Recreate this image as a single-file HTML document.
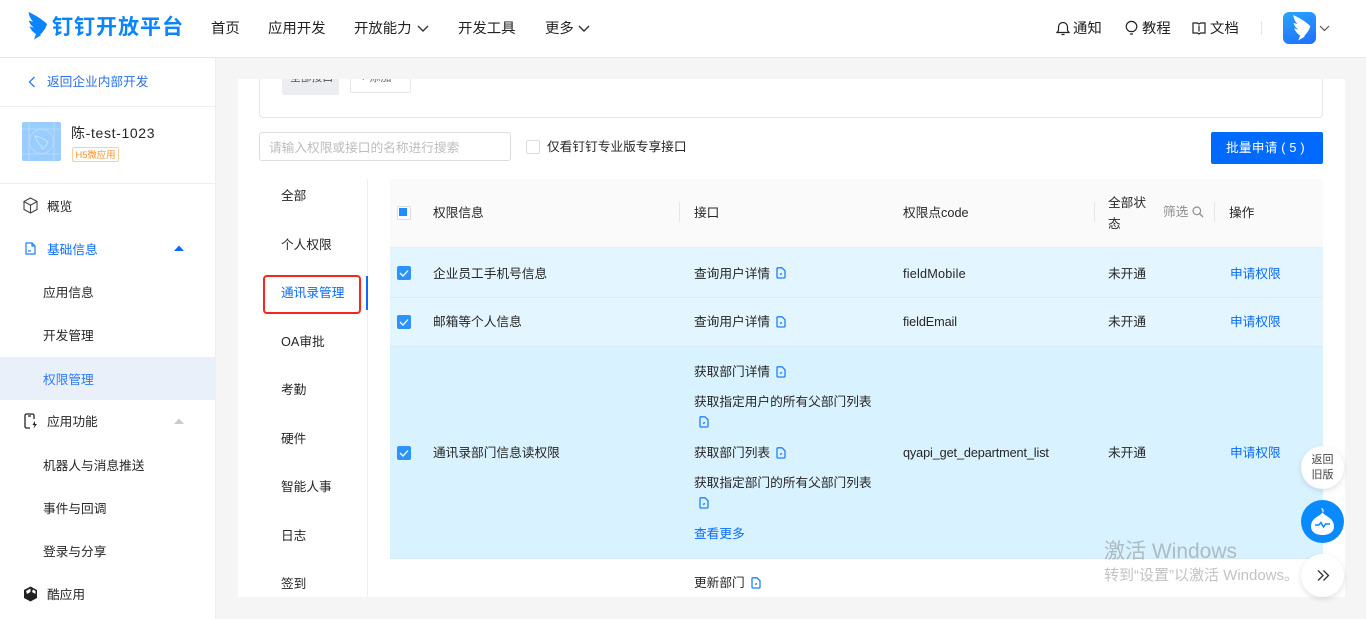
<!DOCTYPE html>
<html lang="zh">
<head>
<meta charset="utf-8">
<title>钉钉开放平台</title>
<style>
html,body{margin:0;padding:0;width:1366px;height:619px;overflow:hidden;background:#f5f5f5}
body{position:relative;font-family:"Liberation Sans","Noto Sans CJK SC",sans-serif;font-size:12.7px;color:#262626}
.a{position:absolute;white-space:nowrap;line-height:20px}
.b{position:absolute}
.blue{color:#0a6cff}
.nav{font-size:14.4px;line-height:20px;top:19px;color:#222}
.m .a,.s{margin-top:1px}
svg{overflow:visible}
.d path{fill:none;stroke:#1e7fff;stroke-width:1.300}
</style>
</head>
<body>
<!-- header -->
<div class="b" style="left:0;top:0;width:1366px;height:57px;background:#fff;border-bottom:1px solid #e8e8e8"></div>
<svg class="b" style="left:28px;top:12px" width="20" height="28" viewBox="0 0 20 28"><path fill="#0a84ff" d="M.5 0C7 3 14 7 19 12C18 16 15 20 12 23L13.500 23L6 27.500L8 22C4.500 20 2.500 17 1.500 14C3 15 4.500 15.500 6 15.500C3.500 14 1.500 11.500 .8 8.500C2 9 3.500 9.500 5 9.500C2.500 7 1 3.500 .5 0Z"/></svg>
<div class="a" style="left:52px;top:14px;font-size:21px;line-height:28px;letter-spacing:1px;font-weight:700;color:#0a84ff">钉钉开放平台</div>
<div class="a nav" style="left:211px">首页</div>
<div class="a nav blue" style="left:268px">应用开发</div>
<div class="a nav" style="left:354px">开放能力</div>
<svg class="b" style="left:417px;top:25px" width="12" height="8"><path d="M1 1L6 6L11 1" fill="none" stroke="#333" stroke-width="1.400"/></svg>
<div class="a nav" style="left:458px">开发工具</div>
<div class="a nav" style="left:545px">更多</div>
<svg class="b" style="left:578px;top:25px" width="12" height="8"><path d="M1 1L6 6L11 1" fill="none" stroke="#333" stroke-width="1.400"/></svg>

<svg class="b" style="left:1056px;top:21px" width="14" height="15" viewBox="0 0 14 15"><path d="M1 11.500H13L11.500 9.500V6A4.500 4.500 0 0 0 2.500 6V9.500ZM5.500 13.500H8.500" fill="none" stroke="#222" stroke-width="1.200"/></svg>
<div class="a nav" style="left:1073px">通知</div>
<svg class="b" style="left:1125px;top:21px" width="13" height="15" viewBox="0 0 13 15"><path d="M4.500 10.500C3 9.500 1.200 8 1.200 5.700A5.300 5.300 0 0 1 11.800 5.700C11.800 8 10 9.500 8.500 10.500ZM5 13H8" fill="none" stroke="#222" stroke-width="1.200"/></svg>
<div class="a nav" style="left:1142px">教程</div>
<svg class="b" style="left:1192px;top:22px" width="14" height="13" viewBox="0 0 14 13"><path d="M1 1H5.500L7 2L8.500 1H13V11H8.500L7 12L5.500 11H1ZM7 3.500V9.500" fill="none" stroke="#222" stroke-width="1.200"/></svg>
<div class="a nav" style="left:1210px">文档</div>
<div class="b" style="left:1261px;top:21px;width:1px;height:14px;background:#e4e4e4"></div>
<div class="b" style="left:1283px;top:12px;width:33px;height:32px;border-radius:6px;background:linear-gradient(160deg,#2aa5ff,#1e6dff)"></div>
<svg class="b" style="left:1292px;top:15px" width="20" height="26" viewBox="0 0 20 28"><path fill="#fff" d="M.5 0C7 3 14 7 19 12C18 16 15 20 12 23L13.500 23L6 27.500L8 22C4.500 20 2.500 17 1.500 14C3 15 4.500 15.500 6 15.500C3.500 14 1.500 11.500 .8 8.500C2 9 3.500 9.500 5 9.500C2.500 7 1 3.500 .5 0Z"/></svg>
<svg class="b" style="left:1319px;top:25px" width="11" height="7"><path d="M1 1L5.500 5.500L10 1" fill="none" stroke="#555" stroke-width="1.200"/></svg>

<!-- sidebar -->
<div class="b" style="left:0;top:58px;width:215px;height:561px;background:#fff;border-right:1px solid #eee"></div>
<svg class="b" style="left:28px;top:76px" width="8" height="12"><path d="M6.500 1L1.500 6L6.500 11" fill="none" stroke="#2c7bf6" stroke-width="1.300"/></svg>
<div class="a" style="left:47px;top:72px;color:#2c6fe8">返回企业内部开发</div>
<div class="b" style="left:0;top:106px;width:215px;height:1px;background:#eee"></div>
<div class="b" style="left:22px;top:122px;width:39px;height:39px;border-radius:2px;background:#99cdff"></div>
<svg class="b" style="left:22px;top:122px" width="39" height="39" viewBox="0 0 39 39"><path d="M7 0V39M32 0V39M0 7H39M0 32H39" stroke="#b4dbff" stroke-width="1" fill="none"/><circle cx="19.500" cy="19.500" r="12" fill="none" stroke="#b4dbff"/><path d="M13 14C18 15 23 17 26 20C25 23 23 25 21 27L19 25L20 24C17 23 15 20 13 14Z" fill="none" stroke="#c3e2ff"/></svg>
<div class="a" style="left:71px;top:123px;font-size:14px;letter-spacing:.65px;color:#262626">陈-test-1023</div>
<div class="a" style="left:72px;top:147px;width:45px;height:13px;line-height:13px;border:1px solid #ffcf99;border-radius:2px;font-size:9.400px;color:#ff8f1f;text-align:center">H5微应用</div>
<div class="b" style="left:0;top:183px;width:215px;height:1px;background:#eee"></div>

<svg class="b" style="left:23px;top:197px" width="15" height="17" viewBox="0 0 15 17"><path d="M7.500 1L14 4.500V12.500L7.500 16L1 12.500V4.500ZM1 4.500L7.500 8.200L14 4.500M7.500 8.200V16" fill="none" stroke="#444" stroke-width="1.100"/></svg>
<div class="a s" style="left:47px;top:196px">概览</div>
<svg class="b" style="left:25px;top:242px" width="11" height="13" viewBox="0 0 11 13"><path d="M1 1H7L10 4V12H1ZM7 1V4H10M3 9H6" fill="none" stroke="#1e7fff" stroke-width="1.200"/></svg>
<div class="a s blue" style="left:47px;top:239px">基础信息</div>
<svg class="b" style="left:174px;top:245px" width="10" height="6"><path d="M0 6L5 .5L10 6Z" fill="#0a6cff"/></svg>
<div class="a s" style="left:43px;top:282px">应用信息</div>
<div class="a s" style="left:43px;top:325px">开发管理</div>
<div class="b" style="left:0;top:357px;width:215px;height:43px;background:#e9f0fa"></div>
<div class="a s" style="left:43px;top:369px;color:#2c7bf6">权限管理</div>
<svg class="b" style="left:24px;top:413px" width="14" height="16" viewBox="0 0 14 16"><path d="M10 6V2.500A1.500 1.500 0 0 0 8.500 1H2.500A1.500 1.500 0 0 0 1 2.500V13.500A1.500 1.500 0 0 0 2.500 15H6M4 3H7" fill="none" stroke="#222" stroke-width="1.300"/><path d="M11 8L8.500 12H10.500L9.500 15.500L13 11H11Z" fill="#222"/></svg>
<div class="a s" style="left:47px;top:411px">应用功能</div>
<svg class="b" style="left:174px;top:418px" width="10" height="6"><path d="M0 6L5 .5L10 6Z" fill="#ccc"/></svg>
<div class="a s" style="left:43px;top:455px">机器人与消息推送</div>
<div class="a s" style="left:43px;top:498px">事件与回调</div>
<div class="a s" style="left:43px;top:541px">登录与分享</div>
<svg class="b" style="left:23px;top:586px" width="15" height="16" viewBox="0 0 15 16"><path d="M7.500 .5L14 4V12L7.500 15.500L1 12V4Z" fill="#222"/><path d="M3 5L7.500 2.500V6L4 8ZM10 3.500L12.500 5V8L9 6Z" fill="#fff"/></svg>
<div class="a s" style="left:47px;top:584px">酷应用</div>

<!-- main -->
<div class="b m" style="left:238px;top:79px;width:1107px;height:518px;background:#fff;overflow:hidden">
  <div class="b" style="left:21px;top:-40px;width:1062px;height:77px;border:1px solid #e6e6e6;border-radius:4px"></div>
  <div class="b" style="left:44px;top:-20px;width:57px;height:36px;background:#ebedf0;border-radius:2px"></div>
  <div class="a" style="left:52px;top:-12px;font-size:10.800px;color:#555">全部接口</div>
  <div class="b" style="left:112px;top:-20px;width:59px;height:32px;border:1px solid #e6e6e6;border-radius:2px"></div>
  <div class="a" style="left:122px;top:-12px;font-size:11px;color:#666">+ 添加</div>

  <div class="b" style="left:21px;top:53px;width:250px;height:27px;border:1px solid #ddd;border-radius:3px"></div>
  <div class="a" style="left:31px;top:58px;color:#bdbdbd">请输入权限或接口的名称进行搜索</div>
  <div class="b" style="left:288px;top:61px;width:12px;height:12px;border:1px solid #ddd;border-radius:2px"></div>
  <div class="a" style="left:309px;top:57px">仅看钉钉专业版专享接口</div>
  <div class="b" style="left:973px;top:53px;width:112px;height:32px;background:#006aff;border-radius:2px"></div>
  <div class="a" style="left:988px;top:58px;color:#fff;letter-spacing:.2px">批量申请 ( 5 )</div>

  <!-- category list -->
  <div class="b" style="left:129px;top:100px;width:1px;height:418px;background:#eee"></div>
  <div class="b" style="left:128px;top:197px;width:2px;height:34px;background:#0a6cff"></div>
  <div class="a" style="left:43px;top:106px">全部</div>
  <div class="a" style="left:43px;top:155px">个人权限</div>
  <div class="a blue" style="left:43px;top:203px">通讯录管理</div>
  <div class="a" style="left:43px;top:252px">OA审批</div>
  <div class="a" style="left:43px;top:300px">考勤</div>
  <div class="a" style="left:43px;top:349px">硬件</div>
  <div class="a" style="left:43px;top:397px">智能人事</div>
  <div class="a" style="left:43px;top:446px">日志</div>
  <div class="a" style="left:43px;top:494px">签到</div>
  <div class="b" style="left:25px;top:196px;width:94px;height:35px;border:2.500px solid #f8261a;border-radius:4px"></div>

  <!-- table bg -->
  <div class="b" style="left:152px;top:100px;width:933px;height:68px;background:#fafafa;border-bottom:1px solid #eee"></div>
  <div class="b" style="left:152px;top:169px;width:933px;height:49px;background:#e3f5ff;border-bottom:1px solid #d9ebf5"></div>
  <div class="b" style="left:152px;top:219px;width:933px;height:48px;background:#e3f5ff;border-bottom:1px solid #d9ebf5"></div>
  <div class="b" style="left:152px;top:268px;width:933px;height:211px;background:#d9f2ff;border-bottom:1px solid #d4e9f4"></div>

  <!-- header cells -->
  <div class="b" style="left:159px;top:127px;width:12px;height:12px;border:1px solid #ddd;border-radius:2px;background:#fff"></div>
  <div class="b" style="left:161px;top:129px;width:8px;height:8px;background:#1f8fff"></div>
  <div class="a" style="left:195px;top:123px">权限信息</div>
  <div class="b" style="left:441px;top:123px;width:1px;height:20px;background:#e6e6e6"></div>
  <div class="a" style="left:456px;top:123px">接口</div>
  <div class="a" style="left:665px;top:123px">权限点code</div>
  <div class="b" style="left:856px;top:123px;width:1px;height:20px;background:#e6e6e6"></div>
  <div class="a" style="left:870px;top:113px">全部状</div>
  <div class="a" style="left:870px;top:134px">态</div>
  <div class="a" style="left:925px;top:122px;color:#8c8c8c">筛选</div>
  <svg class="b" style="left:954px;top:127px" width="12" height="12" viewBox="0 0 12 12"><circle cx="4.800" cy="4.800" r="3.800" fill="none" stroke="#8c8c8c" stroke-width="1.200"/><path d="M7.500 7.500L11 11" stroke="#8c8c8c" stroke-width="1.300"/></svg>
  <div class="b" style="left:976px;top:123px;width:1px;height:20px;background:#e6e6e6"></div>
  <div class="a" style="left:991px;top:123px">操作</div>

  <!-- row 1 -->
  <svg class="b" style="left:159px;top:187px" width="14" height="14"><rect width="14" height="14" rx="2" fill="#2b93fb"/><path d="M3 7L6 10L11 4.500" fill="none" stroke="#fff" stroke-width="1.300"/></svg>
  <div class="a" style="left:195px;top:184px">企业员工手机号信息</div>
  <div class="a" style="left:456px;top:184px">查询用户详情</div>
  <svg class="b d" style="left:538px;top:188px" width="10" height="12" viewBox="0 0 10 12"><path d="M1 1.500C1 1 1.300 .8 1.800 .8H6L9 3.800V10C9 10.700 8.600 11 8 11H2C1.400 11 1 10.700 1 10ZM4 7.500L6 6.500"/></svg>
  <div class="a" style="left:665px;top:184px;letter-spacing:.2px">fieldMobile</div>
  <div class="a" style="left:870px;top:184px">未开通</div>
  <div class="a blue" style="left:992px;top:184px">申请权限</div>

  <!-- row 2 -->
  <svg class="b" style="left:159px;top:236px" width="14" height="14"><rect width="14" height="14" rx="2" fill="#2b93fb"/><path d="M3 7L6 10L11 4.500" fill="none" stroke="#fff" stroke-width="1.300"/></svg>
  <div class="a" style="left:195px;top:232px">邮箱等个人信息</div>
  <div class="a" style="left:456px;top:232px">查询用户详情</div>
  <svg class="b d" style="left:538px;top:237px" width="10" height="12" viewBox="0 0 10 12"><path d="M1 1.500C1 1 1.300 .8 1.800 .8H6L9 3.800V10C9 10.700 8.600 11 8 11H2C1.400 11 1 10.700 1 10ZM4 7.500L6 6.500"/></svg>
  <div class="a" style="left:665px;top:232px;letter-spacing:-.1px">fieldEmail</div>
  <div class="a" style="left:870px;top:232px">未开通</div>
  <div class="a blue" style="left:992px;top:232px">申请权限</div>

  <!-- row 3 -->
  <svg class="b" style="left:159px;top:367px" width="14" height="14"><rect width="14" height="14" rx="2" fill="#2b93fb"/><path d="M3 7L6 10L11 4.500" fill="none" stroke="#fff" stroke-width="1.300"/></svg>
  <div class="a" style="left:195px;top:363px">通讯录部门信息读权限</div>
  <div class="a" style="left:456px;top:282px">获取部门详情</div>
  <svg class="b d" style="left:538px;top:287px" width="10" height="12" viewBox="0 0 10 12"><path d="M1 1.500C1 1 1.300 .8 1.800 .8H6L9 3.800V10C9 10.700 8.600 11 8 11H2C1.400 11 1 10.700 1 10ZM4 7.500L6 6.500"/></svg>
  <div class="a" style="left:456px;top:312px">获取指定用户的所有父部门列表</div>
  <svg class="b d" style="left:461px;top:337px" width="10" height="12" viewBox="0 0 10 12"><path d="M1 1.500C1 1 1.300 .8 1.800 .8H6L9 3.800V10C9 10.700 8.600 11 8 11H2C1.400 11 1 10.700 1 10ZM4 7.500L6 6.500"/></svg>
  <div class="a" style="left:456px;top:363px">获取部门列表</div>
  <svg class="b d" style="left:538px;top:368px" width="10" height="12" viewBox="0 0 10 12"><path d="M1 1.500C1 1 1.300 .8 1.800 .8H6L9 3.800V10C9 10.700 8.600 11 8 11H2C1.400 11 1 10.700 1 10ZM4 7.500L6 6.500"/></svg>
  <div class="a" style="left:456px;top:393px">获取指定部门的所有父部门列表</div>
  <svg class="b d" style="left:461px;top:418px" width="10" height="12" viewBox="0 0 10 12"><path d="M1 1.500C1 1 1.300 .8 1.800 .8H6L9 3.800V10C9 10.700 8.600 11 8 11H2C1.400 11 1 10.700 1 10ZM4 7.500L6 6.500"/></svg>
  <div class="a blue" style="left:456px;top:444px">查看更多</div>
  <div class="a" style="left:665px;top:363px;letter-spacing:-.12px">qyapi_get_department_list</div>
  <div class="a" style="left:870px;top:363px">未开通</div>
  <div class="a blue" style="left:992px;top:363px">申请权限</div>

  <!-- row 4 -->
  <div class="a" style="left:456px;top:493px">更新部门</div>
  <svg class="b d" style="left:513px;top:498px" width="10" height="12" viewBox="0 0 10 12"><path d="M1 1.500C1 1 1.300 .8 1.800 .8H6L9 3.800V10C9 10.700 8.600 11 8 11H2C1.400 11 1 10.700 1 10ZM4 7.500L6 6.500"/></svg>
</div>

<!-- floating -->
<div class="b" style="left:1301px;top:446px;width:43px;height:43px;border-radius:50%;background:#fff;box-shadow:0 2px 6px rgba(0,0,0,.12)"></div>
<div class="a" style="left:1301px;top:453px;width:43px;text-align:center;font-size:11px;line-height:15px;color:#444;white-space:normal">返回<br>旧版</div>
<div class="b" style="left:1301px;top:500px;width:43px;height:43px;border-radius:50%;background:#0a8aff"></div>
<svg class="b" style="left:1310px;top:507px" width="25" height="29" viewBox="0 0 25 29"><path fill="#fff" d="M12.500 5C13.500 9 24 10 24 19.500C24 25 19 28 12.500 28C6 28 1 25 1 19.500C1 10 11.500 9 12.500 5Z"/><path d="M11.500 1.500C13 2.500 13.500 3.500 12.800 5" stroke="#fff" stroke-width="1.200" fill="none"/><path d="M5 18H9L11 15.500L13.500 20L15.500 17H20" fill="none" stroke="#0a8aff" stroke-width="1.500"/></svg>
<div class="b" style="left:1301px;top:554px;width:43px;height:43px;border-radius:50%;background:#fff;box-shadow:0 2px 6px rgba(0,0,0,.12)"></div>
<svg class="b" style="left:1317px;top:570px" width="13" height="11" viewBox="0 0 13 11"><path d="M1 .5L6 5.500L1 10.500M6.500 .5L11.500 5.500L6.500 10.500" fill="none" stroke="#333" stroke-width="1.300"/></svg>

<!-- windows watermark -->
<div class="a" style="left:1104px;top:540px;font-size:21px;line-height:24px;color:rgba(120,120,120,.45)">激活 Windows</div>
<div class="a" style="left:1104px;top:566px;font-size:15px;line-height:20px;color:rgba(120,120,120,.45)">转到“设置”以激活 Windows。</div>
</body>
</html>
